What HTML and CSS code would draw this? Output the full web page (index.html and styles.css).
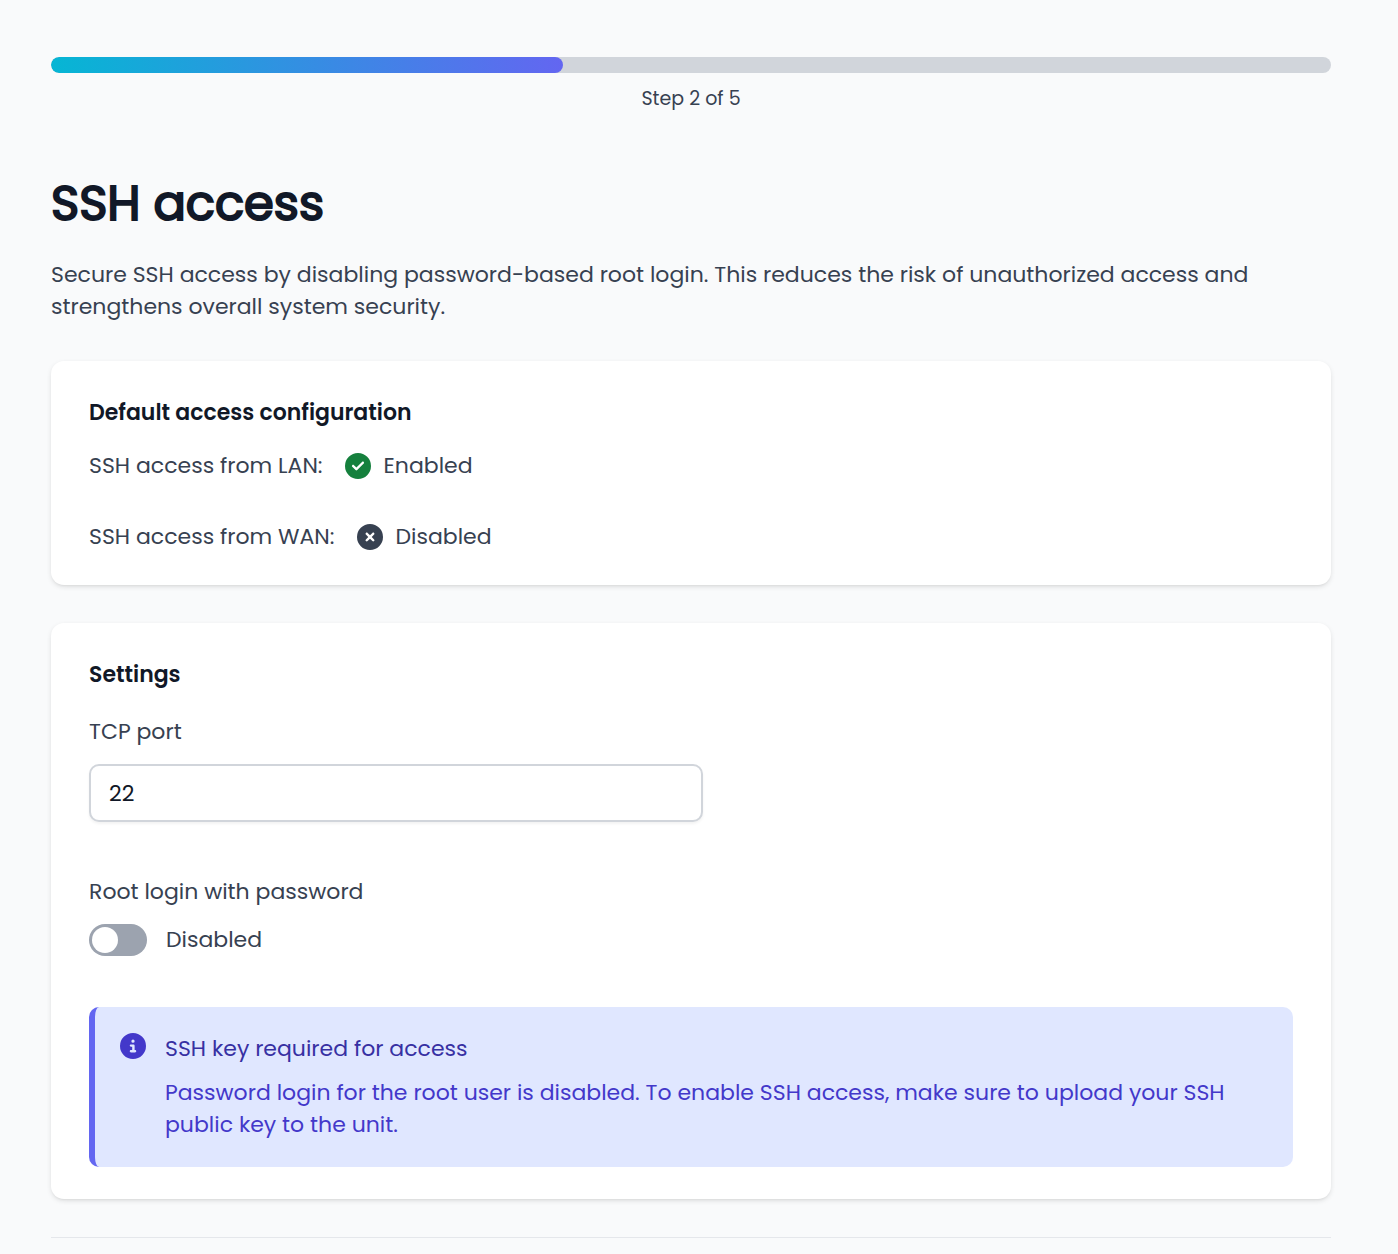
FILE: index.html
```html
<!DOCTYPE html>
<html lang="en">
<head>
<meta charset="utf-8">
<meta name="viewport" content="width=device-width, initial-scale=1">
<title>SSH access</title>
<link rel="stylesheet" href="styles.css">
</head>
<body>
<main class="wizard">
  <div class="progress" role="progressbar" aria-label="Setup progress" aria-valuemin="0" aria-valuemax="5" aria-valuenow="2">
    <div class="progress-fill" style="width: 40%"></div>
  </div>
  <p class="step">Step 2 of 5</p>

  <h1 class="title">SSH access</h1>
  <p class="intro">Secure SSH access by disabling password-based root login. This reduces the risk of unauthorized access and strengthens overall system security.</p>

  <section class="card">
    <h2 class="card-title">Default access configuration</h2>
    <div class="status-list">
      <div class="status">
        <span class="status-name">SSH access from LAN:</span>
        <svg class="icon icon-on" viewBox="0 0 512 512" aria-hidden="true"><path d="M256 512A256 256 0 1 0 256 0a256 256 0 1 0 0 512zM369 209L241 337c-9.400 9.400-24.600 9.400-33.900 0l-64-64c-9.400-9.400-9.400-24.600 0-33.900s24.600-9.400 33.900 0l47 47L335 175c9.400-9.400 24.600-9.400 33.900 0s9.400 24.600 0 33.900z"/></svg>
        <span>Enabled</span>
      </div>
      <div class="status">
        <span class="status-name">SSH access from WAN:</span>
        <svg class="icon icon-off" viewBox="0 0 512 512" aria-hidden="true"><path d="M256 512A256 256 0 1 0 256 0a256 256 0 1 0 0 512zM175 175c9.400-9.400 24.600-9.400 33.900 0l47 47 47-47c9.400-9.400 24.600-9.400 33.900 0s9.400 24.600 0 33.900l-47 47 47 47c9.400 9.400 9.400 24.600 0 33.900s-24.600 9.400-33.900 0l-47-47-47 47c-9.400 9.400-24.600 9.400-33.900 0s-9.400-24.600 0-33.900l47-47-47-47c-9.400-9.400-9.400-24.600 0-33.900z"/></svg>
        <span>Disabled</span>
      </div>
    </div>
  </section>

  <section class="card">
    <h2 class="card-title">Settings</h2>
    <form class="fields">
      <div class="field">
        <label for="port">TCP port</label>
        <input class="text-input" id="port" type="text" inputmode="numeric" value="22">
      </div>
      <div class="field">
        <span id="root-label">Root login with password</span>
        <div class="toggle">
          <input class="switch" id="root-login" type="checkbox" role="switch" aria-describedby="root-label">
          <label for="root-login">Disabled</label>
        </div>
      </div>
    </form>
    <div class="notice">
      <svg class="icon icon-info" viewBox="0 0 512 512" aria-hidden="true"><path d="M256 512A256 256 0 1 0 256 0a256 256 0 1 0 0 512zM216 336h24V272H216c-13.300 0-24-10.700-24-24s10.700-24 24-24h48c13.300 0 24 10.700 24 24v88h8c13.300 0 24 10.700 24 24s-10.700 24-24 24H216c-13.300 0-24-10.700-24-24s10.700-24 24-24zm40-208a32 32 0 1 1 0 64 32 32 0 1 1 0-64z"/></svg>
      <div class="notice-body">
        <h3 class="notice-title">SSH key required for access</h3>
        <p class="notice-text">Password login for the root user is disabled. To enable SSH access, make sure to upload your SSH public key to the unit.</p>
      </div>
    </div>
  </section>

  <hr class="divider">
</main>
</body>
</html>
```

FILE: styles.css
```css
*,
*::before,
*::after {
  box-sizing: border-box;
}

body {
  margin: 0;
  background: #f9fafb;
  color: #374151;
  font-family: Poppins, Inter, "Noto Sans", sans-serif;
  font-size: 22px;
  line-height: 32px;
}

h1, h2, h3, p {
  margin: 0;
}

.wizard {
  padding: 57px 67px 16px 51px;
}

.progress {
  height: 16px;
  border-radius: 8px;
  background: #d1d5db;
  overflow: hidden;
}

.progress-fill {
  height: 100%;
  border-radius: 8px;
  background: linear-gradient(to right, #06b6d4, #6366f1);
}

.step {
  margin-top: 12px;
  font-size: 19px;
  line-height: 28px;
  text-align: center;
}

.title {
  margin-top: 62px;
  color: #111827;
  font-size: 48px;
  font-weight: 400;
  line-height: 58px;
  -webkit-text-stroke: 2px currentColor;
}

.intro {
  margin-top: 26px;
}

.card {
  margin-top: 38px;
  padding: 38px 38px 32px;
  border-radius: 13px;
  background: #ffffff;
  box-shadow: 0 2px 5px rgba(0, 0, 0, 0.1), 0 2px 3px -2px rgba(0, 0, 0, 0.1);
}

.card-title {
  margin-bottom: 23px;
  color: #111827;
  font-size: 22px;
  font-weight: 600;
  line-height: 28px;
}

.status-list {
  display: grid;
  gap: 39px;
}

.status {
  display: flex;
  align-items: center;
  gap: 13px;
}

.status-name {
  margin-right: 9px;
}

.icon {
  flex: none;
  width: 26px;
  height: 26px;
  fill: currentColor;
}

.icon-on {
  color: #15803d;
}

.icon-off {
  color: #374151;
}

.icon-info {
  color: #4338ca;
}

.fields {
  display: grid;
  gap: 54px;
  padding-top: 4px;
}

.field {
  display: grid;
  gap: 16px;
}

.text-input {
  width: 100%;
  max-width: 614px;
  height: 58px;
  padding: 0 18px;
  border: 2px solid #d1d5db;
  border-radius: 10px;
  background: #ffffff;
  box-shadow: 0 2px 3px rgba(0, 0, 0, 0.05);
  color: #111827;
  font: inherit;
}

.toggle {
  display: flex;
  align-items: center;
  gap: 19px;
}

.switch {
  appearance: none;
  display: flex;
  width: 58px;
  height: 32px;
  margin: 0;
  padding: 3px;
  border-radius: 16px;
  background: #9ca3af;
}

.switch::before {
  content: "";
  width: 26px;
  height: 26px;
  border-radius: 50%;
  background: #ffffff;
}

.switch:checked {
  justify-content: flex-end;
  background: #4f46e5;
}

.notice {
  display: flex;
  gap: 19px;
  margin-top: 51px;
  padding: 26px 26px 26px 25px;
  border-left: 6px solid #6366f1;
  border-radius: 10px;
  background: #e0e7ff;
  color: #4338ca;
}

.notice-title {
  color: #3730a3;
  font-size: 22px;
  font-weight: 400;
  line-height: 32px;
}

.notice-text {
  margin-top: 12px;
}

.divider {
  margin: 38px 0 0;
  border: 0;
  border-top: 1px solid #e5e7eb;
}
```
